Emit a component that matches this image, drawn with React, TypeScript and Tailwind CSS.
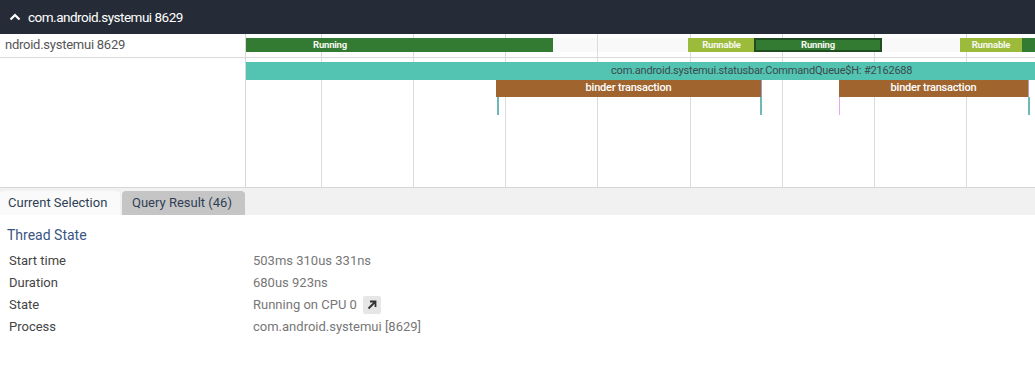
import React from "react";

const gridX = [321, 413, 505, 597, 690, 782, 874, 966];

function Bar({
  left,
  width,
  color,
  label,
  textCenter,
  selected,
}: {
  left: number;
  width: number;
  color: string;
  label: string;
  textCenter?: number;
  selected?: boolean;
}) {
  return (
    <div
      className={`absolute top-[4px] h-[14px] ${selected ? "border-2 border-[#1f4d1f]" : ""}`}
      style={{ left: left - 246, width, background: color }}
    >
      <span
        className="absolute top-1/2 -translate-x-1/2 -translate-y-1/2 whitespace-nowrap text-[9.5px] font-bold leading-none tracking-[-0.2px] text-[#f4f8ee]"
        style={{ left: textCenter !== undefined ? textCenter - left : width / 2 - (selected ? 2 : 0) }}
      >
        {label}
      </span>
    </div>
  );
}

function Grid() {
  return (
    <>
      {gridX.map((x) => (
        <div key={x} className="absolute top-0 bottom-0 w-px bg-[#dcdcdc]" style={{ left: x - 246 }} />
      ))}
    </>
  );
}

export default function App() {
  return (
    <div className="w-[1035px] h-[369px] overflow-hidden bg-white font-['Roboto',sans-serif]">
      {/* header */}
      <div className="flex h-[34px] items-center bg-[#262c37] pl-[8px] text-white">
        <svg width="14" height="14" viewBox="0 0 14 14" className="mr-[6px]">
          <polyline points="2.5,9.5 7,5 11.5,9.5" fill="none" stroke="white" strokeWidth="2.2" />
        </svg>
        <span className="text-[13.5px] tracking-[-0.5px]">com.android.systemui 8629</span>
      </div>

      {/* tracks */}
      <div>
        {/* row 1 */}
        <div className="flex h-[24px] border-b border-[#dadada]">
          <div className="w-[246px] shrink-0 overflow-hidden border-r border-[#d6d6d6] pl-[5px] text-[13px] leading-[22px] tracking-[-0.25px] text-[#555]">
            ndroid.systemui 8629
          </div>
          <div className="relative flex-1">
            <div className="absolute left-0 right-0 top-[4px] h-[14px] bg-[#f9f9f9]" />
            <Grid />
            <Bar left={246} width={307} color="#337b32" label="Running" textCenter={330} />
            <Bar left={688} width={67} color="#9cbb3a" label="Runnable" />
            <Bar left={754} width={128} color="#337b32" label="Running" selected />
            <Bar left={960} width={62} color="#9cbb3a" label="Runnable" />
            <Bar left={1022} width={20} color="#337b32" label="" />
          </div>
        </div>
        {/* row 2 */}
        <div className="flex h-[130px] border-b border-[#d6d6d6]">
          <div className="w-[246px] shrink-0 border-r border-[#d6d6d6]" />
          <div className="relative flex-1">
            <Grid />
            <div className="absolute left-0 right-0 top-[4px] h-[18px] bg-[#53c3b2]">
              <span className="absolute left-[365px] top-0 whitespace-nowrap text-[11px] leading-[18px] tracking-[-0.2px] text-[#3b4a4a]">
                com.android.systemui.statusbar.CommandQueue$H: #2162688
              </span>
            </div>
            <div className="absolute left-[250px] top-[22px] flex h-[17px] w-[265px] items-center justify-center bg-[#a0652f] text-[11px] font-medium tracking-[-0.2px] text-white">
              binder transaction
            </div>
            <div className="absolute left-[515px] top-[22px] h-[17px] w-px bg-[#9a9ac0]" />
            <div className="absolute left-[593px] top-[22px] flex h-[17px] w-[189px] items-center justify-center bg-[#a0652f] text-[11px] font-medium tracking-[-0.2px] text-white">
              binder transaction
            </div>
            <div className="absolute left-[782px] top-[22px] h-[17px] w-px bg-[#b49ac0]" />
            {/* ticks */}
            <div className="absolute left-[251px] top-[39px] h-[18px] w-[2px] bg-[#6fb8b8]" />
            <div className="absolute left-[514px] top-[39px] h-[18px] w-[2px] bg-[#6fb8b8]" />
            <div className="absolute left-[593px] top-[39px] h-[18px] w-px bg-[#e9a6f2]" />
            <div className="absolute left-[782px] top-[39px] h-[18px] w-[2px] bg-[#6fb8b8]" />
          </div>
        </div>
      </div>

      {/* tabs */}
      <div className="flex h-[27px] items-end gap-[2px] bg-[#f1f1f1]">
        <div className="flex h-[24px] w-[120px] items-center rounded-t-[4px] bg-[#fafafa] pl-[8px] text-[13px] text-[#2f3f55]">
          Current Selection
        </div>
        <div className="flex h-[24px] w-[123px] items-center rounded-t-[4px] bg-[#c5c5c5] pl-[10px] text-[13px] text-[#2f3f55]">
          Query Result (46)
        </div>
      </div>

      {/* details */}
      <div className="px-[7px] pt-[10px]">
        <div className="text-[14px] leading-[20px] text-[#3b5584]">Thread State</div>
        <div className="mt-[5px] pl-[2px] text-[13px] leading-[22px]">
          {[
            ["Start time", "503ms 310us 331ns"],
            ["Duration", "680us 923ns"],
            ["State", "Running on CPU 0"],
            ["Process", "com.android.systemui [8629]"],
          ].map(([k, v]) => (
            <div key={k} className="flex">
              <div className="w-[244px] text-[#444]">{k}</div>
              <div className="flex items-center text-[#777]">
                {v}
                {k === "State" && (
                  <span className="ml-[6px] flex h-[18px] w-[18px] items-center justify-center rounded-[2px] bg-[#e6e6e6]">
                    <svg width="12" height="12" viewBox="0 0 12 12">
                      <path d="M2.5 9.5 L9 3 M4 2.5 H9.5 V8" fill="none" stroke="#333" strokeWidth="1.8" />
                    </svg>
                  </span>
                )}
              </div>
            </div>
          ))}
        </div>
      </div>
    </div>
  );
}
